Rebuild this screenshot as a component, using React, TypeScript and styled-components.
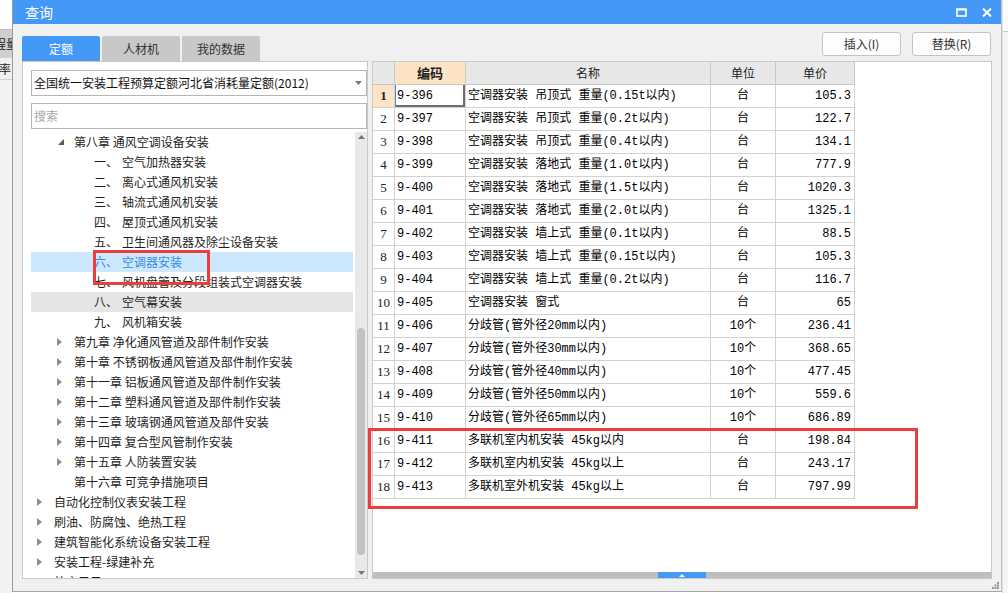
import React from 'react';
import styled, { createGlobalStyle } from 'styled-components';

const UI = `"Noto Sans CJK SC", "Liberation Sans", sans-serif`;
const GRID_FONT = `"Liberation Mono", "Noto Sans CJK SC", monospace`;
const BLUE = '#4499f6';

const GlobalStyle = createGlobalStyle`
  html, body { margin: 0; padding: 0; background: #fff; }
  body { font-family: ${UI}; }
  * { box-sizing: border-box; }
`;

const Page = styled.div`
  position: relative;
  width: 1008px;
  height: 593px;
  display: flex;
  overflow: hidden;
  background: #fff;
`;

/* ---------- background app strips ---------- */
const LeftStrip = styled.div`
  width: 12px;
  flex: none;
  display: flex;
  flex-direction: column;
  background: #f2f2f2;
  overflow: hidden;
`;
const StripTop = styled.div`
  height: 30px;
  background: #fff;
  border-bottom: 1px solid #bdbdbd;
`;
const StripCell = styled.div<{ $bg: string; $h: number }>`
  height: ${p => p.$h}px;
  background: ${p => p.$bg};
  border-bottom: 1px solid #d2d2d2;
  font: 12px/1 ${UI};
  color: #222;
  white-space: nowrap;
  display: flex;
  align-items: center;
`;
const StripText = styled.span<{ $shift: number }>`
  margin-left: ${p => p.$shift}px;
  flex: none;
`;
const RightStrip = styled.div`
  flex: 1;
  display: flex;
  flex-direction: column;
  background: #f5f5f5;
  border-left: 1px solid #e0e0e0;
`;
const RightStripTop = styled.div`
  height: 32px;
  background: #fff;
  border-bottom: 1px solid #c8c8c8;
`;

/* ---------- dialog ---------- */
const Dialog = styled.div`
  position: relative;
  width: 990px;
  height: 592px;
  flex: none;
  display: flex;
  flex-direction: column;
  background: #f0f0f0;
  border-left: 1px solid #9a9a9a;
  border-right: 1px solid #c4c4c4;
  border-bottom: 1px solid #a6a6a6;
`;
const TitleBar = styled.div`
  height: 24px;
  flex: none;
  background: ${BLUE};
  display: flex;
  align-items: center;
  padding: 0 9px 0 12px;
  color: #fff;
  font: 14px/24px ${UI};
`;
const TitleButtons = styled.div`
  margin-left: auto;
  display: flex;
  align-items: center;
  gap: 15px;
`;
const Body = styled.div`
  flex: 1;
  display: flex;
  flex-direction: column;
  padding: 8px 9px 12px 9px;
`;
const HeaderRow = styled.div`
  height: 29px;
  flex: none;
  display: flex;
  align-items: flex-start;
`;
const Tabs = styled.div`
  align-self: flex-end;
  display: flex;
  gap: 2px;
`;
const Tab = styled.div<{ $active?: boolean }>`
  width: 78px;
  height: 25px;
  border-radius: 2px 2px 0 0;
  background: ${p => (p.$active ? BLUE : '#c8c8c8')};
  color: ${p => (p.$active ? '#fff' : '#333')};
  font: 12px/25px ${UI};
  text-align: center;
`;
const Buttons = styled.div`
  margin-left: auto;
  margin-right: 1px;
  display: flex;
  gap: 11px;
`;
const Button = styled.div`
  width: 79px;
  height: 24px;
  background: #fdfdfd;
  border: 1px solid #c3c3c3;
  border-radius: 3px;
  color: #333;
  font: 12px/22px ${UI};
  text-align: center;
`;
const Main = styled.div`
  height: 518px;
  display: flex;
  gap: 4px;
`;

/* ---------- left panel ---------- */
const LeftPanel = styled.div`
  width: 346px;
  flex: none;
  background: #fff;
  border: 1px solid #c9c9c9;
  padding: 8px 0 0 8px;
  display: flex;
  flex-direction: column;
`;
const Select = styled.div`
  height: 26px;
  flex: none;
  border: 1px solid #b5b5b5;
  padding: 0 4px 0 2px;
  display: flex;
  align-items: center;
  font: 12px/24px ${UI};
  color: #111;
`;
const SelectArrow = styled.svg`
  margin-left: auto;
`;
const Search = styled.div`
  height: 26px;
  flex: none;
  margin-top: 7px;
  border: 1px solid #b5b5b5;
  padding: 0 2px;
  font: 12px/24px ${UI};
  color: #a8a8a8;
`;
const TreeWrap = styled.div`
  margin-top: 3px;
  flex: 1;
  display: flex;
  gap: 2px;
  overflow: hidden;
`;
const TreeList = styled.div`
  width: 322px;
  flex: none;
  overflow: hidden;
`;
const TreeRow = styled.div<{ $level: number; $state?: 'sel' | 'hover' }>`
  height: 20px;
  display: flex;
  align-items: center;
  padding-left: ${p => (p.$level - 1) * 20}px;
  white-space: nowrap;
  font: 12px/20px ${UI};
  color: ${p => (p.$state === 'sel' ? '#3a8ce6' : '#1e1e1e')};
  background: ${p => (p.$state === 'sel' ? '#cce8ff' : p.$state === 'hover' ? '#e5e5e5' : 'transparent')};
`;
const ArrowSlot = styled.span`
  width: 23px;
  flex: none;
  display: flex;
  align-items: center;
  padding-left: 6px;
`;
const NumLabel = styled.span`
  width: 28px;
  flex: none;
`;
const ScrollTrack = styled.div`
  width: 12px;
  flex: none;
  background: #e9e9e9;
  display: flex;
  flex-direction: column;
  align-items: center;
`;
const ScrollArrow = styled.svg<{ $end?: boolean }>`
  flex: none;
  margin-top: ${p => (p.$end ? 'auto' : '3px')};
  margin-bottom: ${p => (p.$end ? '3px' : '0')};
`;
const ScrollThumb = styled.div<{ $top: number; $h: number }>`
  width: 8px;
  height: ${p => p.$h}px;
  margin-top: ${p => p.$top}px;
  border-radius: 4px;
  background: #c2c2c2;
  flex: none;
`;

/* ---------- grid panel ---------- */
const GridPanel = styled.div`
  flex: 1;
  background: #fff;
  border: 1px solid #c9c9c9;
  display: flex;
  flex-direction: column;
`;
const GridArea = styled.div`
  flex: 1;
  overflow: hidden;
`;
const GridRow = styled.div`
  display: grid;
  grid-template-columns: 22px 71px 245px 65px 79px;
  height: 23px;
`;
const HeadCell = styled.div<{ $hl?: boolean }>`
  background: ${p => (p.$hl ? '#fde4c4' : '#e8e8e8')};
  border-right: 1px solid #c8c8c8;
  border-bottom: 1px solid #c8c8c8;
  font: ${p => (p.$hl ? 'bold 13px' : '12px')}/22px ${UI};
  color: #222;
  text-align: center;
`;
const NumCell = styled.div<{ $hl?: boolean }>`
  background: ${p => (p.$hl ? '#fde4c4' : '#fff')};
  border-right: 1px solid #d2d2d2;
  border-bottom: 1px solid #d2d2d2;
  font: ${p => (p.$hl ? 'bold 13px' : '13px')}/22px "Liberation Serif", serif;
  color: #222;
  text-align: center;
`;
const Cell = styled.div<{ $align?: 'left' | 'center' | 'right'; $focus?: boolean }>`
  border-right: 1px solid #d2d2d2;
  border-bottom: 1px solid #d2d2d2;
  font: 12px/22px ${GRID_FONT};
  color: #000;
  white-space: nowrap;
  overflow: hidden;
  text-align: ${p => p.$align || 'left'};
  padding: 0 ${p => (p.$align === 'right' ? '3px' : '2px')} 0 2px;
  box-shadow: ${p => (p.$focus ? 'inset 1px 0 0 #3d8ff5, inset -2px -2px 0 #6e6e6e' : 'none')};
`;
const BottomBar = styled.div`
  height: 6px;
  flex: none;
  background: #bebebe;
  display: flex;
  justify-content: center;
`;
const Handle = styled.div`
  width: 48px;
  height: 6px;
  background: ${BLUE};
  display: flex;
  align-items: center;
  justify-content: center;
`;

/* ---------- overlays ---------- */
const RedBox = styled.div<{ $x: number; $y: number; $w: number; $h: number }>`
  position: absolute;
  left: ${p => p.$x}px;
  top: ${p => p.$y}px;
  width: ${p => p.$w}px;
  height: ${p => p.$h}px;
  border: 3px solid #ee3b3b;
  pointer-events: none;
`;
const Grip = styled.svg`
  position: absolute;
  right: 2px;
  bottom: 2px;
`;

/* ---------- data ---------- */
type Node = {
  level: number;
  kind: 'open' | 'closed' | 'leaf';
  num?: string;
  text: string;
  state?: 'sel' | 'hover';
};

const tree: Node[] = [
  { level: 2, kind: 'open', text: '第八章 通风空调设备安装' },
  { level: 3, kind: 'leaf', num: '一、', text: '空气加热器安装' },
  { level: 3, kind: 'leaf', num: '二、', text: '离心式通风机安装' },
  { level: 3, kind: 'leaf', num: '三、', text: '轴流式通风机安装' },
  { level: 3, kind: 'leaf', num: '四、', text: '屋顶式通风机安装' },
  { level: 3, kind: 'leaf', num: '五、', text: '卫生间通风器及除尘设备安装' },
  { level: 3, kind: 'leaf', num: '六、', text: '空调器安装', state: 'sel' },
  { level: 3, kind: 'leaf', num: '七、', text: '风机盘管及分段组装式空调器安装' },
  { level: 3, kind: 'leaf', num: '八、', text: '空气幕安装', state: 'hover' },
  { level: 3, kind: 'leaf', num: '九、', text: '风机箱安装' },
  { level: 2, kind: 'closed', text: '第九章 净化通风管道及部件制作安装' },
  { level: 2, kind: 'closed', text: '第十章 不锈钢板通风管道及部件制作安装' },
  { level: 2, kind: 'closed', text: '第十一章 铝板通风管道及部件制作安装' },
  { level: 2, kind: 'closed', text: '第十二章 塑料通风管道及部件制作安装' },
  { level: 2, kind: 'closed', text: '第十三章 玻璃钢通风管道及部件安装' },
  { level: 2, kind: 'closed', text: '第十四章 复合型风管制作安装' },
  { level: 2, kind: 'closed', text: '第十五章 人防装置安装' },
  { level: 2, kind: 'leaf', text: '第十六章 可竞争措施项目' },
  { level: 1, kind: 'closed', text: '自动化控制仪表安装工程' },
  { level: 1, kind: 'closed', text: '刷油、防腐蚀、绝热工程' },
  { level: 1, kind: 'closed', text: '建筑智能化系统设备安装工程' },
  { level: 1, kind: 'closed', text: '安装工程-绿建补充' },
  { level: 1, kind: 'closed', text: '补充子目' },
];

const rows: [string, string, string, string][] = [
  ['9-396', '空调器安装 吊顶式 重量(0.15t以内)', '台', '105.3'],
  ['9-397', '空调器安装 吊顶式 重量(0.2t以内)', '台', '122.7'],
  ['9-398', '空调器安装 吊顶式 重量(0.4t以内)', '台', '134.1'],
  ['9-399', '空调器安装 落地式 重量(1.0t以内)', '台', '777.9'],
  ['9-400', '空调器安装 落地式 重量(1.5t以内)', '台', '1020.3'],
  ['9-401', '空调器安装 落地式 重量(2.0t以内)', '台', '1325.1'],
  ['9-402', '空调器安装 墙上式 重量(0.1t以内)', '台', '88.5'],
  ['9-403', '空调器安装 墙上式 重量(0.15t以内)', '台', '105.3'],
  ['9-404', '空调器安装 墙上式 重量(0.2t以内)', '台', '116.7'],
  ['9-405', '空调器安装 窗式', '台', '65'],
  ['9-406', '分歧管(管外径20mm以内)', '10个', '236.41'],
  ['9-407', '分歧管(管外径30mm以内)', '10个', '368.65'],
  ['9-408', '分歧管(管外径40mm以内)', '10个', '477.45'],
  ['9-409', '分歧管(管外径50mm以内)', '10个', '559.6'],
  ['9-410', '分歧管(管外径65mm以内)', '10个', '686.89'],
  ['9-411', '多联机室内机安装 45kg以内', '台', '198.84'],
  ['9-412', '多联机室内机安装 45kg以上', '台', '243.17'],
  ['9-413', '多联机室外机安装 45kg以上', '台', '797.99'],
];

const TreeArrow: React.FC<{ kind: Node['kind'] }> = ({ kind }) => {
  if (kind === 'closed')
    return (
      <svg width="5" height="8" viewBox="0 0 5 8">
        <path d="M0 0 L5 4 L0 8 Z" fill="#8c8c8c" />
      </svg>
    );
  if (kind === 'open')
    return (
      <svg width="7" height="7" viewBox="0 0 7 7" style={{ marginLeft: 1 }}>
        <path d="M6 0 L6 6 L0 6 Z" fill="#5a5a5a" />
      </svg>
    );
  return null;
};

export default function App() {
  return (
    <Page>
      <GlobalStyle />
      <LeftStrip>
        <StripTop />
        <StripCell $bg="#cfcfcf" $h={28}>
          <StripText $shift={-18}>工程量</StripText>
        </StripCell>
        <StripCell $bg="#f0f0f0" $h={22}>
          <StripText $shift={-13}>费率</StripText>
        </StripCell>
      </LeftStrip>

      <Dialog>
        <TitleBar>
          <span>查询</span>
          <TitleButtons>
            <svg width="11" height="9" viewBox="0 0 11 9">
              <rect x="1" y="1.25" width="9" height="6.75" fill="none" stroke="#fff" strokeWidth="1.6" />
              <rect x="0.5" y="0.5" width="10" height="2" fill="#fff" />
            </svg>
            <svg width="10" height="9" viewBox="0 0 10 9">
              <path d="M1 0.5 L9 8.5 M9 0.5 L1 8.5" stroke="#fff" strokeWidth="2" />
            </svg>
          </TitleButtons>
        </TitleBar>

        <Body>
          <HeaderRow>
            <Tabs>
              <Tab $active>定额</Tab>
              <Tab>人材机</Tab>
              <Tab>我的数据</Tab>
            </Tabs>
            <Buttons>
              <Button>插入(I)</Button>
              <Button>替换(R)</Button>
            </Buttons>
          </HeaderRow>

          <Main>
            <LeftPanel>
              <Select>
                <span>全国统一安装工程预算定额河北省消耗量定额(2012)</span>
                <SelectArrow width="7" height="4" viewBox="0 0 7 4">
                  <path d="M0 0 L7 0 L3.5 4 Z" fill="#777" />
                </SelectArrow>
              </Select>
              <Search>搜索</Search>
              <TreeWrap>
                <TreeList>
                  {tree.map((n, i) => (
                    <TreeRow key={i} $level={n.level} $state={n.state}>
                      <ArrowSlot>
                        <TreeArrow kind={n.kind} />
                      </ArrowSlot>
                      {n.num && <NumLabel>{n.num}</NumLabel>}
                      <span>{n.text}</span>
                    </TreeRow>
                  ))}
                </TreeList>
                <ScrollTrack>
                  <ScrollArrow width="7" height="4" viewBox="0 0 7 4">
                    <path d="M0 4 L7 4 L3.5 0 Z" fill="#777" />
                  </ScrollArrow>
                  <ScrollThumb $top={189} $h={227} />
                  <ScrollArrow $end width="7" height="4" viewBox="0 0 7 4">
                    <path d="M0 0 L7 0 L3.5 4 Z" fill="#777" />
                  </ScrollArrow>
                </ScrollTrack>
              </TreeWrap>
            </LeftPanel>

            <GridPanel>
              <GridArea>
                <GridRow>
                  <HeadCell />
                  <HeadCell $hl>编码</HeadCell>
                  <HeadCell>名称</HeadCell>
                  <HeadCell>单位</HeadCell>
                  <HeadCell>单价</HeadCell>
                </GridRow>
                {rows.map((r, i) => (
                  <GridRow key={r[0]}>
                    <NumCell $hl={i === 0}>{i + 1}</NumCell>
                    <Cell $focus={i === 0}>{r[0]}</Cell>
                    <Cell>{r[1]}</Cell>
                    <Cell $align="center">{r[2]}</Cell>
                    <Cell $align="right">{r[3]}</Cell>
                  </GridRow>
                ))}
              </GridArea>
              <BottomBar>
                <Handle>
                  <svg width="6" height="3" viewBox="0 0 6 3">
                    <path d="M0 3 L6 3 L3 0 Z" fill="#fff" />
                  </svg>
                </Handle>
              </BottomBar>
            </GridPanel>
          </Main>
        </Body>

        <Grip width="7" height="7" viewBox="0 0 7 7">
          <g fill="#9a9a9a">
            <rect x="5" y="0" width="2" height="2" />
            <rect x="2.5" y="2.5" width="2" height="2" />
            <rect x="5" y="2.5" width="2" height="2" />
            <rect x="0" y="5" width="2" height="2" />
            <rect x="2.5" y="5" width="2" height="2" />
            <rect x="5" y="5" width="2" height="2" />
          </g>
        </Grip>
      </Dialog>

      <RightStrip>
        <RightStripTop />
      </RightStrip>

      <RedBox $x={93} $y={250} $w={117} $h={35} />
      <RedBox $x={368} $y={428} $w={550} $h={81} />
    </Page>
  );
}
